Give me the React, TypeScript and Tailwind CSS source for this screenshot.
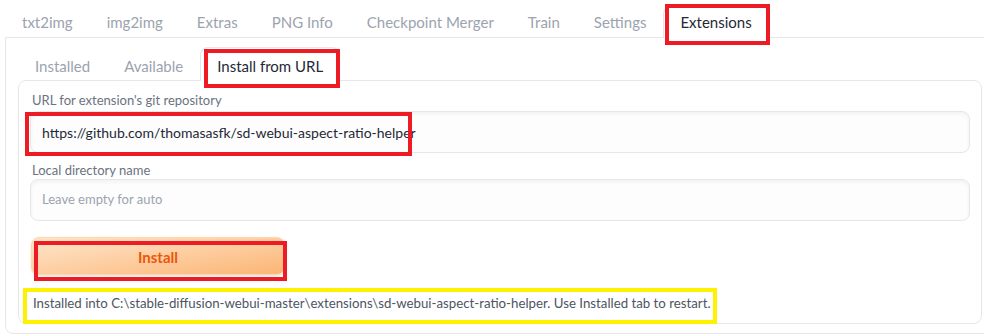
import React from "react";

const topTabs = [
  "txt2img",
  "img2img",
  "Extras",
  "PNG Info",
  "Checkpoint Merger",
  "Train",
  "Settings",
  "Extensions",
];

const subTabs = ["Installed", "Available", "Install from URL"];

// annotation frame drawn over the screenshot
function Mark({ className }: { className: string }) {
  return <span className={`pointer-events-none absolute border-4 ${className}`} />;
}

export default function App() {
  return (
    <div
      className="h-[336px] w-[984px] overflow-hidden bg-white text-[15px]"
      style={{ fontFamily: "Lato, 'Open Sans', sans-serif" }}
    >
      <div className="ml-[5px] pt-[6px]">
        <div className="flex h-[31px]">
          {topTabs.map((t) => {
            const active = t === "Extensions";
            return (
              <div
                key={t}
                className={
                  active
                    ? "relative z-10 flex h-[32px] items-center rounded-t-lg border border-b-0 border-gray-200 bg-white px-4 text-[#1f2937]"
                    : "flex h-[32px] items-center border border-b-0 border-transparent px-4 text-[#9ca3af]"
                }
              >
                {t}
                {active && (
                  <Mark className="left-[1px] right-[-2px] top-[-3px] bottom-[-7px] border-[#ed1c24]" />
                )}
              </div>
            );
          })}
        </div>

        <div className="w-[990px] rounded-b-lg border border-gray-200 px-[12px] pb-[9px] pt-[9px]">
          <div className="flex h-[33px]">
            {subTabs.map((t) => {
              const active = t === "Install from URL";
              return (
                <div
                  key={t}
                  className={
                    active
                      ? "relative z-10 flex h-[34px] items-center rounded-t-lg border border-b-0 border-gray-200 bg-white px-4 pt-[4px] text-[#1f2937]"
                      : "flex h-[34px] items-center border border-b-0 border-transparent px-4 pt-[4px] text-[#9ca3af]"
                  }
                >
                  {t}
                  {active && (
                    <Mark className="left-[3px] right-[-1px] top-[1px] bottom-[-7px] border-[#ed1c24]" />
                  )}
                </div>
              );
            })}
          </div>

          <div className="w-[964px] rounded-lg border border-gray-200 px-[11px] pb-[9px] pt-[10px]">
            <div className="h-[20px] pl-[2px] text-[13px] leading-[18px] text-[#6b7280]">
              URL for extension's git repository
            </div>
            <div className="relative flex h-[42px] items-center rounded-lg border border-gray-200 bg-[#fdfdfd] px-[11px] text-[14px] text-[#1f2937] shadow-inner">
              https://github.com/thomasasfk/sd-webui-aspect-ratio-helper
              <Mark className="left-[-6px] top-0 h-[44px] w-[387px] border-[#ed1c24]" />
            </div>

            <div className="mt-[6px] h-[20px] pl-[2px] text-[13px] leading-[22px] text-[#6b7280]">
              Local directory name
            </div>
            <div className="flex h-[42px] items-center rounded-lg border border-gray-200 bg-[#fdfdfd] px-[11px] text-[13px] text-[#9ca3af] shadow-inner">
              Leave empty for auto
            </div>

            <div className="relative ml-px mt-[16px] flex h-[38px] w-[254px] items-center justify-center rounded-lg border border-orange-200 bg-gradient-to-br from-[#fee6cc] to-[#fbb574] pt-[3px] text-[15px] font-bold text-[#ea580c] shadow-sm">
              Install
              <Mark className="left-[2px] right-[-3px] top-[3px] bottom-[-7px] border-[#ed1c24]" />
            </div>

            <div className="mt-[19px] flex h-[20px] items-center pl-[3px]">
              <span className="relative text-[13.25px] text-[#4b5563]">
                Installed into C:\stable-diffusion-webui-master\extensions\sd-webui-aspect-ratio-helper. Use Installed tab to restart.
                <Mark className="left-[-10px] right-[-6px] top-[-6px] bottom-[-10px] border-[#fff200]" />
              </span>
            </div>
          </div>
        </div>
      </div>
    </div>
  );
}
